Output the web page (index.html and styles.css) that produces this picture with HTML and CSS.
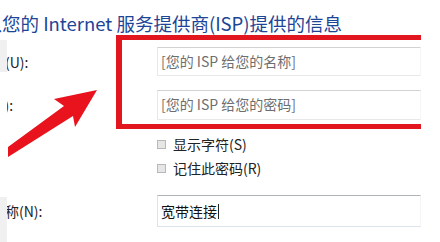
FILE: index.html
```html
<!DOCTYPE html>
<html lang="zh-CN">
<head>
    <meta charset="UTF-8">
    <meta name="viewport" content="width=device-width, initial-scale=1.0">
    <title>连接到 Internet</title>
    <link rel="stylesheet" href="styles.css">
</head>
<body>
    <div class="dialog">
        <h1 class="title">键入您的 Internet 服务提供商(ISP)提供的信息</h1>
        <div class="form">
            <div class="row row-user">
                <span class="label">用户名(U):</span>
                <div class="field"><span class="cue">[您的 ISP 给您的名称]</span></div>
            </div>
            <div class="row row-pass">
                <span class="label">密码(P):</span>
                <div class="field"><span class="cue">[您的 ISP 给您的密码]</span></div>
            </div>
            <div class="row row-show">
                <span class="label"></span>
                <span class="check"><span class="box"></span>显示字符(S)</span>
            </div>
            <div class="row row-remember">
                <span class="label"></span>
                <span class="check"><span class="box"></span>记住此密码(R)</span>
            </div>
            <div class="row row-name">
                <span class="label">连接名称(N):</span>
                <div class="field field-focus">宽带连接<span class="caret"></span></div>
            </div>
        </div>
    </div>

    <div class="edge">
        <div class="edge-patch top"></div>
        <div class="edge-patch bottom"></div>
    </div>

    <!-- annotation drawn over the screenshot -->
    <div class="mark-box"></div>
    <svg class="mark-arrow" width="100" height="80" viewBox="0 0 100 80">
        <polygon points="97,10 54,19 64,26 8,67 8,77 73,36 75,47" fill="#e8131d"/>
    </svg>
</body>
</html>
```

FILE: styles.css
```css
body {
    margin: 0;
    width: 440px;
    height: 242px;
    overflow: hidden;
    position: relative;
    background: #fff;
    font-family: 'Noto Sans CJK SC', 'Noto Sans', sans-serif;
    color: #222;
}
.dialog {
    margin-left: -37px;
    width: 460px;
}
.title {
    margin: 11px 0 0 2px;
    font-size: 18.5px;
    line-height: 24px;
    font-weight: normal;
    color: #1d4597;
    white-space: nowrap;
}
.form {
    margin-top: 12px;
    font-size: 14px;
}
.row {
    display: flex;
    align-items: center;
}
.row .label {
    width: 194px;
    flex: none;
    white-space: nowrap;
}
.field {
    width: 264px;
    box-sizing: border-box;
    padding: 0 3px;
    border: 1px solid #e8e8e8;
    border-top-color: #d2d2d2;
    border-right-color: #f6f6f6;
    display: flex;
    align-items: center;
    white-space: nowrap;
}
.cue {
    color: #6e6e6e;
    margin-top: -2px;
}
.row-user .field { height: 29px; }
.row-pass { margin-top: 14px; }
.row-pass .field { height: 30px; }
.row-show { margin-top: 14px; height: 20px; }
.row-remember { margin-top: 4px; height: 20px; }
.row-name { margin-top: 17px; }
.field-focus {
    height: 32px;
    color: #111;
    border-color: #dde3ea;
    border-top-color: #b0b3b8;
    border-right-color: #f2f4f6;
}
.caret {
    width: 1px;
    height: 15px;
    background: #222;
    margin-left: 1px;
}
.check {
    display: flex;
    align-items: center;
    white-space: nowrap;
}
.box {
    width: 9px;
    height: 9px;
    box-sizing: border-box;
    border: 1px solid #b8b8b8;
    background: #e6e6e6;
    margin-right: 7px;
}
.edge {
    position: absolute;
    left: 0;
    top: 38px;
    width: 7px;
    height: 204px;
    background: #fff;
}
.edge-patch {
    position: absolute;
    left: 0;
    width: 7px;
    background: #f0f0f0;
}
.edge-patch.top { top: 2px; height: 32px; }
.edge-patch.bottom { top: 159px; height: 45px; }
.mark-box {
    position: absolute;
    left: 116px;
    top: 35px;
    width: 305px;
    height: 94px;
    box-sizing: border-box;
    border: 5px solid #e2161f;
    border-left-width: 6px;
    border-right: none;
}
.mark-arrow {
    position: absolute;
    left: 0;
    top: 80px;
}
```
